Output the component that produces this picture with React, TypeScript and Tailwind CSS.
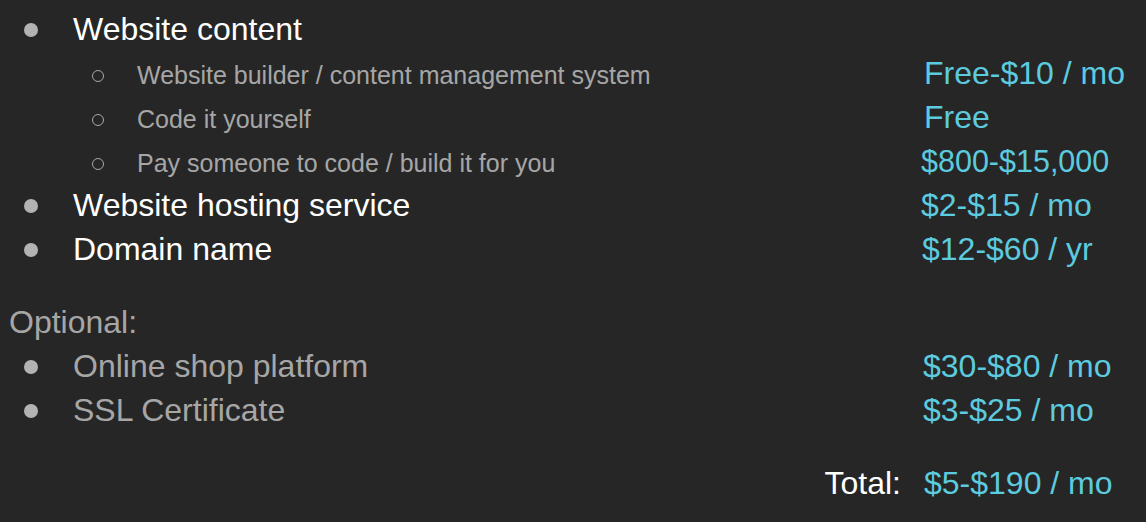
const cyan = "text-[#5ccbdf]";

type Row =
  | { kind: "main"; label: string; price?: string; shift?: string; dim?: boolean }
  | { kind: "sub"; label: string; price: string; shift?: string; priceSize?: string }
  | { kind: "heading"; label: string }
  | { kind: "gap"; h: string };

const rows: Row[] = [
  { kind: "main", label: "Website content" },
  { kind: "sub", label: "Website builder / content management system", price: "Free-$10 / mo", shift: "pl-[3px]" },
  { kind: "sub", label: "Code it yourself", price: "Free", shift: "pl-[3px]" },
  { kind: "sub", label: "Pay someone to code / build it for you", price: "$800-$15,000", priceSize: "text-[30.5px]" },
  { kind: "main", label: "Website hosting service", price: "$2-$15 / mo" },
  { kind: "main", label: "Domain name", price: "$12-$60 / yr", shift: "pl-[1px]" },
  { kind: "gap", h: "h-[29px]" },
  { kind: "heading", label: "Optional:" },
  { kind: "main", label: "Online shop platform", price: "$30-$80 / mo", shift: "pl-[2px]", dim: true },
  { kind: "main", label: "SSL Certificate", price: "$3-$25 / mo", shift: "pl-[2px]", dim: true },
  { kind: "gap", h: "h-[29px]" },
];

function Price({ value, size = "text-[32px]", shift = "" }: { value?: string; size?: string; shift?: string }) {
  return <div className={`flex-1 ${shift} ${size} ${cyan} leading-none whitespace-nowrap`}>{value}</div>;
}

function Line({ row }: { row: Row }) {
  if (row.kind === "gap") return <div className={row.h} />;
  if (row.kind === "heading")
    return (
      <div className="flex h-[44px] items-center pl-[9px] text-[32px] text-[#a6a6a6]">{row.label}</div>
    );
  if (row.kind === "sub")
    return (
      <div className="flex h-[44px] items-center">
        <div className="flex w-[921px] items-center">
          <span className="ml-[92px] mt-[6px] h-[12px] w-[12px] rounded-full border-[1.5px] border-[#a8a8a8]" />
          <span className="ml-[33px] mt-[6px] text-[25px] text-[#a6a6a6] whitespace-nowrap">{row.label}</span>
        </div>
        <Price value={row.price} size={row.priceSize} shift={row.shift} />
      </div>
    );
  return (
    <div className="flex h-[44px] items-center">
      <div className="flex w-[921px] items-center">
        <span className="ml-[24px] mt-[2px] h-[14px] w-[14px] rounded-full bg-[#b3b3b3]" />
        <span className={`ml-[35px] text-[32px] whitespace-nowrap ${row.dim ? "text-[#a6a6a6]" : "text-white"}`}>
          {row.label}
        </span>
      </div>
      <Price value={row.price} shift={row.shift} />
    </div>
  );
}

export default function App() {
  return (
    <div
      className="h-[522px] w-[1146px] overflow-hidden bg-[#262626] pt-[7px]"
      style={{ fontFamily: '"Liberation Sans", Arial, sans-serif' }}
    >
      {rows.map((row, i) => (
        <Line key={i} row={row} />
      ))}
      <div className="flex h-[44px] items-center">
        <div className="flex w-[921px] justify-end pr-[20px] text-[32px] text-white">Total:</div>
        <Price value="$5-$190 / mo" shift="pl-[3px]" />
      </div>
    </div>
  );
}
